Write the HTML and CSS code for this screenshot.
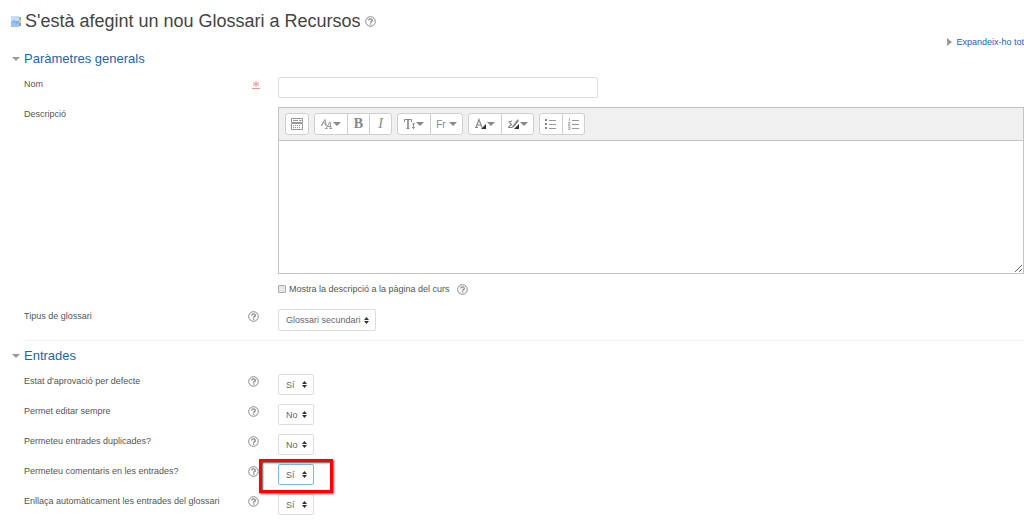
FILE: index.html
```html
<!DOCTYPE html>
<html lang="ca">
<head>
<meta charset="utf-8">
<meta name="viewport" content="width=device-width, initial-scale=1">
<title>S'està afegint un nou Glossari a Recursos</title>
<link rel="stylesheet" href="styles.css">
</head>
<body>

<svg class="symbols" aria-hidden="true">
  <symbol id="help" viewBox="0 0 11 11">
    <circle cx="5.5" cy="5.5" r="4.8" fill="none" stroke="#888" stroke-width="1"/>
    <path d="M3.7 4.5C3.7 2.4 7.3 2.4 7.3 4.4C7.3 5.6 5.6 5.6 5.6 6.8" fill="none" stroke="#888" stroke-width="1.3"/>
    <rect x="4.9" y="7.4" width="1.4" height="1.3" fill="#888"/>
  </symbol>
</svg>

<h1 class="title">
  <svg class="title-icon" viewBox="0 0 10 11" aria-hidden="true">
    <rect x="0" y="0" width="8" height="11" fill="#c3dcf7"/>
    <rect x="0" y="5" width="8" height="6" fill="#9cc3f0"/>
    <path d="M1.5 7L3 4L4.5 7M5 5.5H7V7H5Z" fill="none" stroke="#6f9fdc" stroke-width=".7"/>
    <rect x="8" y="1" width="2" height="3" fill="#8fc3a8"/>
    <rect x="8" y="4" width="2" height="3" fill="#f0c75a"/>
    <rect x="8" y="7" width="2" height="3" fill="#6fa3e4"/>
  </svg>
  S'està afegint un nou Glossari a Recursos
  <a class="help" href="#" aria-label="Ajuda"><svg><use href="#help"/></svg></a>
</h1>

<form>
  <div class="expand"><a href="#">Expandeix-ho tot</a></div>

  <section>
    <h2 class="legend"><a href="#">Paràmetres generals</a></h2>

    <div class="row">
      <label for="name">Nom</label>
      <span class="mark">
        <svg class="required" viewBox="0 0 8 9" aria-hidden="true">
          <path d="M4 0V6M1 1.5L7 4.5M7 1.5L1 4.5" stroke="#f3949c" stroke-width="1"/>
          <path d="M0 7.5H8" stroke="#f3949c" stroke-width="1"/>
        </svg>
      </span>
      <div class="field"><input id="name" class="text" type="text" required></div>
    </div>

    <div class="row">
      <label for="intro">Descripció</label>
      <span class="mark"></span>
      <div class="field">
        <div class="editor">
          <div class="toolbar">
            <div class="group">
              <button type="button" aria-label="Mostra més botons">
                <svg width="12" height="12" viewBox="0 0 12 12">
                  <path d="M.5 .5H11.5V4.5H.5ZM.5 5.5H11.5V11.5H.5ZM2 2.5H7M8 2.5H10.5" fill="none" stroke="#999"/>
                  <path d="M2 7.5H10M2 9.5H10" stroke="#999" stroke-dasharray="1 1"/>
                </svg>
              </button>
            </div>
            <div class="group">
              <button type="button" class="wide" aria-label="Estil de paràgraf">
                <svg width="11" height="12" viewBox="0 0 11 12" fill="none" stroke="#888" stroke-width=".9">
                  <path d="M.5 7L4 1.5L5 7M1.8 5H4.8M0 7H2M4 7H6"/>
                  <path d="M5 10.5L9 4L10 10.5M6.3 8.5H9.7M4 10.5H6.5M8.5 10.5H11"/>
                </svg>
                <i class="caret"></i>
              </button>
              <button type="button" class="serif bold">B</button>
              <button type="button" class="serif italic">I</button>
            </div>
            <div class="group">
              <button type="button" class="wide" aria-label="Mida de la lletra">
                <svg width="11" height="12" viewBox="0 0 11 12" fill="none" stroke="#888">
                  <path d="M.5 4V1.5H7.5V4M2.5 10.5H5.5"/>
                  <path d="M4 1.5V10.5" stroke-width="1.6"/>
                  <path d="M9.5 5V11M8 6.5L9.5 5L11 6.5M8 9L9.5 10.5L11 9" stroke-width=".9"/>
                </svg>
                <i class="caret"></i>
              </button>
              <button type="button" class="wide sans"><span>Fr</span><i class="caret"></i></button>
            </div>
            <div class="group">
              <button type="button" class="wide" aria-label="Color de la lletra">
                <svg width="11" height="12" viewBox="0 0 11 12">
                  <path d="M1 9.5L4 1.5L7 9.5M2 7H6M0 9.5H3" fill="none" stroke="#888" stroke-width="1.2"/>
                  <path d="M11 6V11H6Z" fill="#333"/>
                </svg>
                <i class="caret"></i>
              </button>
              <button type="button" class="wide" aria-label="Color de fons">
                <svg width="11" height="12" viewBox="0 0 11 12">
                  <path d="M4 3L1 4L3.5 6.5L0 9.5H4L10 1.5M5 9L10.5 2.5" fill="none" stroke="#888" stroke-width="1.2"/>
                  <path d="M11 6V11H6Z" fill="#333"/>
                </svg>
                <i class="caret"></i>
              </button>
            </div>
            <div class="group">
              <button type="button" aria-label="Llista">
                <svg width="12" height="12" viewBox="0 0 12 12">
                  <path d="M0 2H2M0 6H2M0 10H2" stroke="#888" stroke-width="2"/>
                  <path d="M4 2.5H11M4 6.5H11M4 10.5H11" stroke="#999"/>
                </svg>
              </button>
              <button type="button" aria-label="Llista numerada">
                <svg width="12" height="12" viewBox="0 0 12 12" fill="none" stroke="#999">
                  <path d="M1.5 0V3M0 4.5H2V6H.5V7.5H2.5M0 9H2V11.5H0M.5 10H2" stroke-width=".8"/>
                  <path d="M4 2.5H11M4 6.5H11M4 10.5H11"/>
                </svg>
              </button>
            </div>
          </div>
          <textarea id="intro"></textarea>
        </div>
        <div class="check">
          <input id="showdesc" type="checkbox">
          <label for="showdesc">Mostra la descripció a la pàgina del curs</label>
          <a class="help" href="#" aria-label="Ajuda"><svg><use href="#help"/></svg></a>
        </div>
      </div>
    </div>

    <div class="row">
      <label for="type">Tipus de glossari</label>
      <a class="mark help" href="#" aria-label="Ajuda"><svg><use href="#help"/></svg></a>
      <div class="field"><select id="type" class="long"><option>Glossari secundari</option></select></div>
    </div>
  </section>

  <section class="entries">
    <h2 class="legend"><a href="#">Entrades</a></h2>

    <div class="row">
      <label for="approval">Estat d'aprovació per defecte</label>
      <a class="mark help" href="#" aria-label="Ajuda"><svg><use href="#help"/></svg></a>
      <div class="field"><select id="approval"><option>Sí</option><option>No</option></select></div>
    </div>
    <div class="row">
      <label for="edit">Permet editar sempre</label>
      <a class="mark help" href="#" aria-label="Ajuda"><svg><use href="#help"/></svg></a>
      <div class="field"><select id="edit"><option>No</option><option>Sí</option></select></div>
    </div>
    <div class="row">
      <label for="duplicates">Permeteu entrades duplicades?</label>
      <a class="mark help" href="#" aria-label="Ajuda"><svg><use href="#help"/></svg></a>
      <div class="field"><select id="duplicates"><option>No</option><option>Sí</option></select></div>
    </div>
    <div class="row">
      <label for="comments">Permeteu comentaris en les entrades?</label>
      <a class="mark help" href="#" aria-label="Ajuda"><svg><use href="#help"/></svg></a>
      <div class="field highlight"><select id="comments" class="active"><option>Sí</option><option>No</option></select></div>
    </div>
    <div class="row">
      <label for="autolink">Enllaça automàticament les entrades del glossari</label>
      <a class="mark help" href="#" aria-label="Ajuda"><svg><use href="#help"/></svg></a>
      <div class="field"><select id="autolink"><option>Sí</option><option>No</option></select></div>
    </div>
  </section>
</form>

</body>
</html>
```

FILE: styles.css
```css
*, *::after {
  box-sizing: border-box;
}

body {
  margin: 0;
  padding-top: 9px;
  background: #fff;
  color: #555;
  font: 9px/12px "Liberation Sans", Arial, sans-serif;
  overflow: hidden;
}

a {
  color: #1765b9;
  text-decoration: none;
}

.symbols {
  display: none;
}

.title {
  display: flex;
  align-items: center;
  gap: 4px;
  margin: 0;
  padding-left: 11px;
  color: #444;
  font-size: 18px;
  font-weight: normal;
  line-height: 24px;
}

.title-icon {
  width: 10px;
  height: 11px;
}

.help svg {
  display: block;
  width: 11px;
  height: 11px;
}

.expand {
  padding-top: 3px;
  text-align: right;
}

/* Small grey triangle in front of the link */
.expand a::before {
  content: "";
  display: inline-block;
  margin-right: 4px;
  border: 4px solid transparent;
  border-left: 5px solid #999;
  border-right: 0;
  vertical-align: -1px;
}

.legend {
  display: flex;
  align-items: center;
  gap: 4px;
  margin: 3px 0 10px;
  padding-left: 12px;
  font-size: 13px;
  font-weight: normal;
  line-height: 16px;
}

.legend::before {
  content: "";
  border: 4px solid transparent;
  border-top: 4px solid #999;
  border-bottom: 0;
}

/* Label, mark and control */
.row {
  display: grid;
  grid-template-columns: 224px 30px 1fr;
  margin-left: 24px;
  padding-bottom: 9px;
}

.row > label {
  padding-top: 1px;
}

.mark {
  padding-top: 2px;
}

.required {
  display: block;
  width: 8px;
  height: 9px;
  margin: 2px 4px;
}

.text {
  display: block;
  width: 320px;
  height: 21px;
  border: 1px solid #ddd;
  border-radius: 2px;
}

.editor {
  border: 1px solid #c4c4c4;
}

.toolbar {
  display: flex;
  gap: 5px;
  padding: 5px 6px;
  background: #f0f0f0;
  border-bottom: 1px solid #c4c4c4;
}

.group {
  display: flex;
  background: #fff;
  border: 1px solid #d0d0d0;
  border-radius: 3px;
}

.group button {
  display: flex;
  align-items: center;
  justify-content: center;
  gap: 1px;
  width: 22px;
  height: 20px;
  padding: 0;
  background: none;
  border: 0;
  color: #888;
}

.group button + button {
  border-left: 1px solid #d0d0d0;
}

.group .wide {
  width: 32px;
}

.serif {
  font: 14px "Liberation Serif", serif;
}

.bold {
  font-weight: bold;
}

.italic {
  font-style: italic;
}

.sans {
  font: 10px "Liberation Sans", Arial, sans-serif;
}

.sans span {
  margin-right: 2px;
}

.caret {
  border: 4px solid transparent;
  border-top: 4px solid #888;
  border-bottom: 0;
}

textarea {
  display: block;
  width: 100%;
  height: 132px;
  border: 0;
  resize: vertical;
}

.check {
  display: flex;
  align-items: center;
  gap: 3px;
  padding: 9px 0 5px;
}

.check input {
  appearance: none;
  width: 8px;
  height: 8px;
  margin: 0;
  background: #e8e8e8;
  border: 1px solid #aaa;
  border-radius: 1px;
}

.check .help {
  margin-left: 4px;
}

select {
  appearance: none;
  display: block;
  width: 36px;
  height: 21px;
  padding: 0 7px;
  background: #fff url("data:image/svg+xml,%3Csvg xmlns='http://www.w3.org/2000/svg' width='5' height='7'%3E%3Cpath d='M0 3L2.5 0L5 3ZM0 4L2.5 7L5 4Z' fill='%23333'/%3E%3C/svg%3E") no-repeat right 6px center;
  border: 1px solid #ddd;
  border-radius: 2px;
  color: #666;
  font: 9px "Liberation Sans", Arial, sans-serif;
}

.long {
  width: 98px;
  height: 22px;
}

.active {
  border-color: #7db9ea;
}

/* Red frame lying over the row */
.highlight {
  position: relative;
}

.highlight::after {
  content: "";
  position: absolute;
  top: -5px;
  left: -19px;
  width: 74px;
  height: 34px;
  border: 3px solid #f00;
  box-shadow: 1px 1px 2px #555, inset 1px 1px 2px #555;
  pointer-events: none;
}

.entries .legend {
  margin-top: 0;
}

.entries::before {
  content: "";
  display: block;
  margin: 0 0 7px 24px;
  border-top: 1px solid #f0f0f0;
}
```
